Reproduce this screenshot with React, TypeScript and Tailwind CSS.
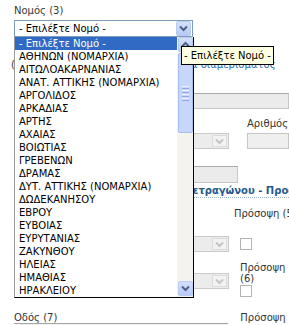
import React from "react";

const items = [
  "ΑΘΗΝΩΝ (ΝΟΜΑΡΧΙΑ)",
  "ΑΙΤΩΛΟΑΚΑΡΝΑΝΙΑΣ",
  "ΑΝΑΤ. ΑΤΤΙΚΗΣ (ΝΟΜΑΡΧΙΑ)",
  "ΑΡΓΟΛΙΔΟΣ",
  "ΑΡΚΑΔΙΑΣ",
  "ΑΡΤΗΣ",
  "ΑΧΑΙΑΣ",
  "ΒΟΙΩΤΙΑΣ",
  "ΓΡΕΒΕΝΩΝ",
  "ΔΡΑΜΑΣ",
  "ΔΥΤ. ΑΤΤΙΚΗΣ (ΝΟΜΑΡΧΙΑ)",
  "ΔΩΔΕΚΑΝΗΣΟΥ",
  "ΕΒΡΟΥ",
  "ΕΥΒΟΙΑΣ",
  "ΕΥΡΥΤΑΝΙΑΣ",
  "ΖΑΚΥΝΘΟΥ",
  "ΗΛΕΙΑΣ",
  "ΗΜΑΘΙΑΣ",
  "ΗΡΑΚΛΕΙΟΥ",
];

function XpArrow({ up = false }: { up?: boolean }) {
  return (
    <div className="w-[15px] h-[15px] rounded-[2px] border border-[#b9cbf3] bg-gradient-to-b from-[#d4e0fc] to-[#b7cbf7] flex items-center justify-center">
      <svg width="9" height="7" viewBox="0 0 9 7">
        {up ? (
          <path d="M1 5.5 L4.5 2 L8 5.5" fill="none" stroke="#4d6185" strokeWidth="2" />
        ) : (
          <path d="M1 1.5 L4.5 5 L8 1.5" fill="none" stroke="#4d6185" strokeWidth="2" />
        )}
      </svg>
    </div>
  );
}

function DisabledSelect({ w }: { w: string }) {
  return (
    <div className={`${w} h-[16px] border border-[#cacaca] bg-[#ececec] flex items-center justify-end pr-[1px]`}>
      <div className="w-[15px] h-[12px] border border-[#dcdcdc] bg-[#f3f3f3] flex items-center justify-center">
        <svg width="9" height="7" viewBox="0 0 9 7">
          <path d="M1 1.5 L4.5 5 L8 1.5" fill="none" stroke="#c4c4c4" strokeWidth="2" />
        </svg>
      </div>
    </div>
  );
}

function Checkbox() {
  return <div className="w-[12px] h-[12px] border border-[#b3b3b3] bg-white" />;
}

export default function App() {
  return (
    <div
      className="relative w-[289px] h-[325px] overflow-hidden bg-white text-[10px] leading-[12px] text-black"
      style={{ fontFamily: '"DejaVu Sans", "Liberation Sans", sans-serif' }}
    >
      {/* Νομός label + select */}
      <div className="pl-[14px] pt-[4px]">
        <div className="h-[13px] leading-[13px] text-[#3a3a3a]">Νομός (3)</div>
        <div className="mt-[3px] w-[179px] h-[17px] border border-[#7f9db9] bg-white flex items-center justify-between pl-[4px] pr-[1px]">
          <span className="text-black">- Επιλέξτε Νομό -</span>
          <XpArrow />
        </div>
      </div>

      {/* background form (mostly hidden behind open list) */}
      <div className="flex flex-col">
        <div className="mt-[22px] h-[12px] flex whitespace-nowrap">
          <span className="ml-[11px] text-[#333]">(</span>
          <span className="ml-[100px] text-[#2a6cb0]">Χαρακτηριστικά διαμερίσματος</span>
        </div>
        <div className="mt-[22px] h-[16px] flex">
          <div className="ml-[100px] w-[200px] h-[16px] border border-[#c6c6c6] border-t-[#a9a9a9] bg-[#ebebeb]" />
        </div>
        <div className="mt-[9px] h-[12px] flex">
          <span className="ml-[247px] text-[#333] whitespace-nowrap">Αριθμός</span>
        </div>
        <div className="mt-[3px] h-[16px] flex">
          <div className="ml-[100px]">
            <DisabledSelect w="w-[129px]" />
          </div>
          <div className="ml-[18px] w-[60px] h-[16px] border border-[#c6c6c6] bg-[#efefef]" />
        </div>
        <div className="mt-[17px] h-[17px] flex">
          <div className="ml-[100px] w-[138px] h-[17px] border border-[#c6c6c6] border-t-[#a9a9a9] bg-[#ebebeb]" />
        </div>
        <div className="mt-[2px] h-[13px] flex whitespace-nowrap border-b border-dotted border-[#9bb5cf] ml-[100px]">
          <span className="ml-[86px] font-bold text-[#245a8d]">Τετραγώνου - Προσόψεις</span>
        </div>
        <div className="mt-[10px] h-[12px] flex items-center whitespace-nowrap">
          <div className="ml-[8px] w-[6px] h-[1px] bg-[#777]" />
          <span className="ml-[226px] text-[#333]">Πρόσοψη (5)</span>
        </div>
        <div className="mt-[16px] h-[15px] flex">
          <div className="ml-[100px]">
            <DisabledSelect w="w-[129px]" />
          </div>
          <div className="ml-[11px] mt-[2px]">
            <Checkbox />
          </div>
        </div>
        <div className="mt-[11px] flex">
          <div className="ml-[100px] pt-[11px]">
            <DisabledSelect w="w-[129px]" />
          </div>
          <div className="ml-[11px] flex flex-col text-[#333]">
            <span className="h-[11px] leading-[11px]">Πρόσοψη</span>
            <span className="h-[12px] leading-[12px]">(6)</span>
            <Checkbox />
          </div>
        </div>
        <div className="mt-[15px] h-[11px] flex whitespace-nowrap text-[#333] leading-[11px]">
          <span className="ml-[14px]">Οδός (7)</span>
          <span className="ml-[183px]">Πρόσοψη</span>
        </div>
        <div className="ml-[14px] w-[214px] h-[10px] border-t border-[#a5a5a5] bg-[#f2f2f2]" />
      </div>

      {/* open dropdown list */}
      <div className="absolute left-[14px] top-[37px] w-[180px] h-[261px] flex border-l border-l-[#9a9a9a] border-r border-r-black border-b border-b-black bg-white">
        <div className="w-[162px] flex flex-col">
          <div className="h-[13px] leading-[13px] pl-[4px] bg-[#316ac5] text-white whitespace-nowrap">
            - Επιλέξτε Νομό -
          </div>
          {items.map((t) => (
            <div key={t} className="h-[13px] leading-[13px] pl-[4px] whitespace-nowrap overflow-hidden">
              {t}
            </div>
          ))}
        </div>
        <div className="w-[16px] h-[260px] bg-[#f4f3ee] flex flex-col justify-between pl-[1px]">
          <div className="flex flex-col">
            <XpArrow up />
            <div className="mt-[1px] w-[15px] h-[80px] rounded-[2px] border border-[#a6bdf0] bg-[#c6d6fc] flex flex-col items-center justify-center gap-[1px]">
              <div className="w-[7px] h-[1px] bg-[#eef3ff]" />
              <div className="w-[7px] h-[1px] bg-[#8fa9e6]" />
              <div className="w-[7px] h-[1px] bg-[#eef3ff]" />
              <div className="w-[7px] h-[1px] bg-[#8fa9e6]" />
              <div className="w-[7px] h-[1px] bg-[#eef3ff]" />
              <div className="w-[7px] h-[1px] bg-[#8fa9e6]" />
              <div className="w-[7px] h-[1px] bg-[#eef3ff]" />
              <div className="w-[7px] h-[1px] bg-[#8fa9e6]" />
            </div>
          </div>
          <div className="mb-[1px]">
            <XpArrow />
          </div>
        </div>
      </div>

      {/* tooltip */}
      <div className="absolute left-[181px] top-[46px] h-[19px] px-[2px] border border-black bg-[#ffffe1] flex items-center whitespace-nowrap text-black">
        - Επιλέξτε Νομό -
      </div>
    </div>
  );
}
